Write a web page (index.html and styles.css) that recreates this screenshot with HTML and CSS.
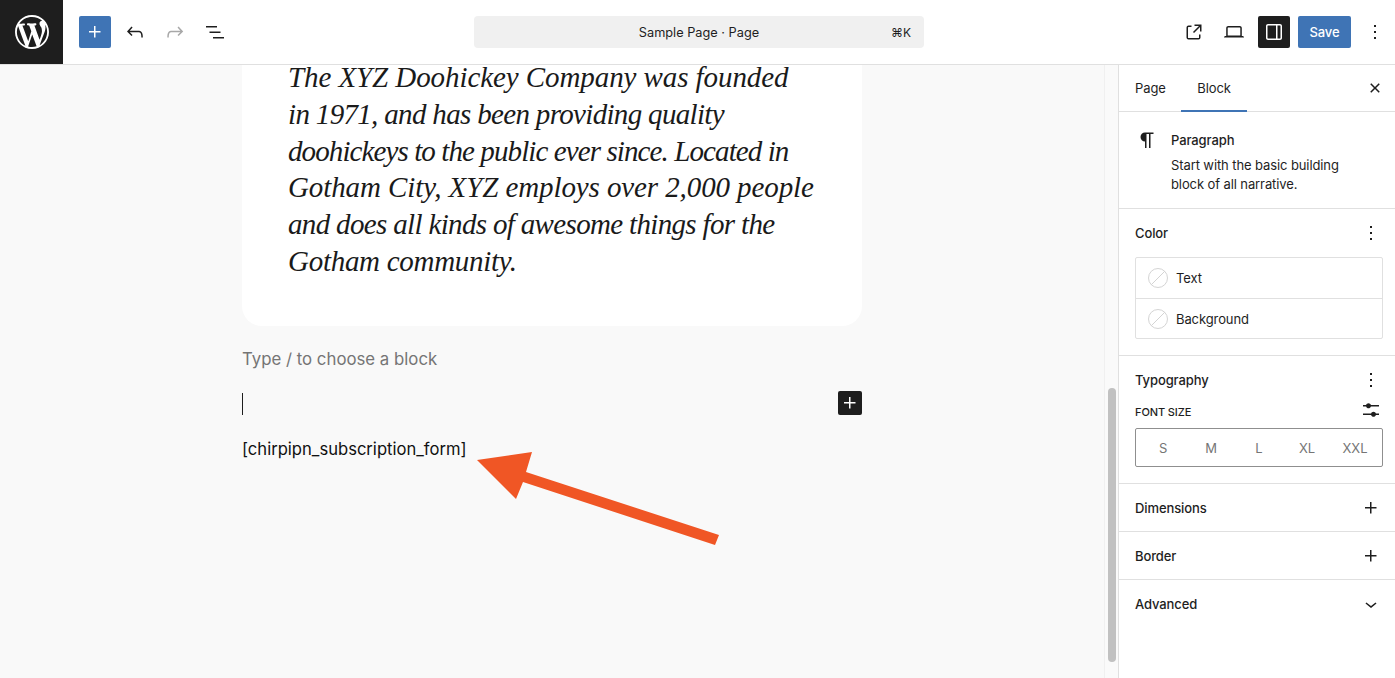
FILE: index.html
```html
<!DOCTYPE html>
<html lang="en">
<head>
<meta charset="utf-8">
<title>Sample Page</title>
<link rel="stylesheet" href="styles.css">
</head>
<body>
<header class="topbar">
  <a class="logo"><svg width="34" height="34" viewBox="0 0 20 20"><path fill="#fff" d="M20 10c0-5.51-4.49-10-10-10C4.48 0 0 4.49 0 10c0 5.52 4.48 10 10 10 5.51 0 10-4.48 10-10zM7.78 15.37L4.37 6.22c.55-.02 1.17-.08 1.17-.08.5-.06.44-1.13-.06-1.11 0 0-1.45.11-2.37.11-.18 0-.37 0-.58-.01C4.12 2.69 6.87 1.11 10 1.11c2.33 0 4.45.87 6.05 2.34-.68-.11-1.65.39-1.65 1.58 0 .74.45 1.36.9 2.1.35.61.55 1.36.55 2.46 0 1.49-1.4 5-1.4 5l-3.03-8.37c.54-.02.82-.17.82-.17.5-.05.44-1.25-.06-1.22 0 0-1.44.12-2.38.12-.87 0-2.33-.12-2.33-.12-.5-.03-.56 1.2-.06 1.22l.92.08 1.26 3.41zM17.41 10c.24-.64.74-1.87.43-4.25.7 1.29 1.05 2.71 1.05 4.25 0 3.29-1.73 6.24-4.4 7.78.97-2.59 1.94-5.2 2.92-7.78zM6.1 18.09C3.12 16.65 1.11 13.53 1.11 10c0-1.3.23-2.48.72-3.59C3.25 10.3 4.67 14.2 6.1 18.09zm4.03-6.63l2.58 6.98c-.86.29-1.76.45-2.71.45-.79 0-1.57-.11-2.29-.33.81-2.38 1.62-4.74 2.42-7.1z"/></svg></a>
  <div class="tools-left">
    <span class="btn btn-primary"><svg class="ico" viewBox="0 0 24 24"><path d="M11 12.5V17.5H12.5V12.5H17.5V11H12.5V6H11V11H6V12.5H11Z"/></svg></span>
    <span class="btn btn-gap"><svg class="ico" viewBox="0 0 24 24"><path d="M18.3 11.7c-.6-.6-1.4-.9-2.3-.9H6.7l2.9-3.3-1.1-1-4.5 5L8.5 16l1-1-2.7-2.7H16c.5 0 .9.2 1.3.5 1 1 1 3.4 1 4.5v.3h1.5v-.2c0-1.5 0-4.3-1.5-5.7z"/></svg></span>
    <span class="btn btn-gap btn-disabled"><svg class="ico" viewBox="0 0 24 24"><path d="M15.6 6.5l-1.1 1 2.9 3.3H8c-.9 0-1.7.3-2.3.9-1.4 1.5-1.4 4.2-1.4 5.6v.2h1.5v-.3c0-1.1 0-3.5 1-4.5.3-.3.7-.5 1.3-.5h9.2L14.5 15l1.1 1.1 4.6-4.6-4.6-5z"/></svg></span>
    <span class="btn btn-gap"><svg class="ico" viewBox="0 0 24 24"><path d="M3 6h11v1.5H3V6Zm3.5 5.5h11V13h-11v-1.5ZM21 17H10v1.5h11V17Z"/></svg></span>
  </div>
  <div class="command-wrap">
    <div class="command"><span class="command-title">Sample Page · Page</span><span class="command-key">⌘K</span></div>
  </div>
  <div class="tools-right">
    <span class="btn"><svg class="ico" viewBox="0 0 24 24"><path d="M19.5 4.5h-7V6h4.44l-5.97 5.97 1.06 1.06L18 7.06v4.44h1.5v-7Zm-13 1a2 2 0 0 0-2 2v10a2 2 0 0 0 2 2h10a2 2 0 0 0 2-2v-3H17v3a.5.5 0 0 1-.5.5h-10a.5.5 0 0 1-.5-.5v-10a.5.5 0 0 1 .5-.5h3V5.5h-3Z"/></svg></span>
    <span class="btn btn-gap"><svg class="ico" viewBox="0 0 24 24"><path d="M20.5 16h-.7V8c0-1.1-.9-2-2-2H6.2c-1.1 0-2 .9-2 2v8h-.7c-.8 0-1.5.7-1.5 1.5h20c0-.8-.7-1.5-1.5-1.5zM5.7 8c0-.3.2-.5.5-.5h11.6c.3 0 .5.2.5.5v7.6H5.7V8z"/></svg></span>
    <span class="btn btn-dark"><svg class="ico" viewBox="0 0 24 24"><path fill-rule="evenodd" d="M18 4H6c-1.1 0-2 .9-2 2v12c0 1.1.9 2 2 2h12c1.1 0 2-.9 2-2V6c0-1.1-.9-2-2-2zm-4 14.5H6c-.3 0-.5-.2-.5-.5V6c0-.3.2-.5.5-.5h8v13zm4.5-.5c0 .3-.2.5-.5.5h-2.5v-13H18c.3 0 .5.2.5.5v12z"/></svg></span>
    <span class="save">Save</span>
    <span class="btn btn-more"><svg class="ico" viewBox="0 0 24 24"><path d="M13 19h-2v-2h2v2zm0-6h-2v-2h2v2zm0-6h-2V5h2v2z"/></svg></span>
  </div>
</header>
<main class="workspace">
  <section class="canvas">
    <div class="canvas-inner">
      <div class="card">
        <p class="quote"><span class="line line-1">The XYZ Doohickey Company was founded</span><span class="line line-2">in 1971, and has been providing quality</span><span class="line line-3">doohickeys to the public ever since. Located in</span><span class="line line-4">Gotham City, XYZ employs over 2,000 people</span><span class="line line-5">and does all kinds of awesome things for the</span><span class="line line-6">Gotham community.</span></p>
      </div>
      <p class="placeholder">Type / to choose a block</p>
      <div class="empty-block"><span class="caret"></span><span class="inline-add"><svg width="24" height="24" viewBox="0 0 24 24"><path fill="#fff" d="M11 12.5V17.5H12.5V12.5H17.5V11H12.5V6H11V11H6V12.5H11Z"/></svg></span></div>
      <p class="shortcode">[chirpipn_subscription_form]</p>
    </div>
    <svg class="arrow" width="260" height="110" viewBox="470 445 260 110"><polygon fill="#f05625" points="477,460 532,452 526,472 719,535 715,545 523,482 516,499"/></svg>
    <div class="scroll-track"><span class="scroll-thumb"></span></div>
  </section>
  <aside class="sidebar">
    <div class="tabs">
      <span class="tab tab-page">Page</span>
      <span class="tab tab-active">Block</span>
      <span class="tab-close"><svg class="ico" viewBox="0 0 24 24"><path d="M12 13.06l3.712 3.713 1.061-1.06L13.061 12l3.712-3.712-1.06-1.06L12 10.938 8.288 7.227l-1.061 1.06L10.939 12l-3.712 3.712 1.06 1.061L12 13.061z"/></svg></span>
    </div>
    <div class="block-card">
      <svg class="block-icon" width="24" height="24" viewBox="0 0 24 24"><path d="M18.5 4.5H10C7.5 4.5 5.5 6.4 5.5 9s2 4.500 4.500 4.500V20h1.500V6h2.500v14H15.500V6h3z"/></svg>
      <div>
        <h2 class="block-name">Paragraph</h2>
        <p class="block-desc">Start with the basic building<br>block of all narrative.</p>
      </div>
    </div>
    <div class="panel">
      <div class="panel-head"><h3 class="panel-title">Color</h3><svg class="ico" viewBox="0 0 24 24"><path d="M13 19h-2v-2h2v2zm0-6h-2v-2h2v2zm0-6h-2V5h2v2z"/></svg></div>
      <div class="color-box">
        <div class="color-row"><span class="swatch"></span>Text</div>
        <div class="color-row"><span class="swatch"></span>Background</div>
      </div>
    </div>
    <div class="panel">
      <div class="panel-head"><h3 class="panel-title">Typography</h3><svg class="ico" viewBox="0 0 24 24"><path d="M13 19h-2v-2h2v2zm0-6h-2v-2h2v2zm0-6h-2V5h2v2z"/></svg></div>
      <div class="font-head"><span class="font-label">FONT SIZE</span><svg class="ico" viewBox="0 0 24 24"><path d="M14.5 13.8c-1.100 0-2.100.7-2.400 1.800H4V17h8.100c.3 1 1.300 1.800 2.400 1.800s2.100-.7 2.400-1.800H20v-1.500h-3.100c-.3-1-1.300-1.700-2.400-1.700zM11.900 7c-.3-1-1.300-1.800-2.400-1.800S7.400 6 7.100 7H4v1.500h3.100c.3 1 1.300 1.800 2.400 1.800s2.100-.7 2.400-1.800H20V7h-8.100z"/></svg></div>
      <div class="segments"><span>S</span><span>M</span><span>L</span><span>XL</span><span>XXL</span></div>
    </div>
    <div class="panel panel-closed"><h3 class="panel-title">Dimensions</h3><svg class="ico" viewBox="0 0 24 24"><path d="M11 12.5V17.5H12.5V12.5H17.5V11H12.500V6H11V11H6V12.5H11Z"/></svg></div>
    <div class="panel panel-closed"><h3 class="panel-title">Border</h3><svg class="ico" viewBox="0 0 24 24"><path d="M11 12.5V17.5H12.5V12.5H17.5V11H12.500V6H11V11H6V12.5H11Z"/></svg></div>
    <div class="panel panel-closed panel-last"><h3 class="panel-title">Advanced</h3><svg class="ico" viewBox="0 0 24 24"><path d="M17.5 11.600L12 16l-5.500-4.400.9-1.200L12 14l4.500-3.600 1 1.200z"/></svg></div>
  </aside>
</main>
</body>
</html>
```
FILE: styles.css
```css
* { box-sizing: border-box; }
html, body { margin: 0; height: 100%; }
body {
  display: flex;
  flex-direction: column;
  height: 678px;
  overflow: hidden;
  font-family: Inter, "Liberation Sans", sans-serif;
  font-size: 13px;
  letter-spacing: -0.1px;
  color: #1e1e1e;
  background: #fff;
}
h2, h3, p { margin: 0; font-weight: 400; }
.ico { width: 24px; height: 24px; fill: currentColor; display: block; flex: none; }

.topbar {
  flex: none;
  height: 65px;
  display: flex;
  align-items: center;
  border-bottom: 1px solid #e0e0e0;
}
.logo {
  width: 63px;
  height: 64px;
  background: #1e1e1e;
  display: flex;
  align-items: center;
  justify-content: center;
}
.tools-left { display: flex; align-items: center; margin-left: 16px; width: 395px; }
.btn {
  width: 32px;
  height: 32px;
  border-radius: 2px;
  display: flex;
  align-items: center;
  justify-content: center;
}
.btn-gap { margin-left: 8px; }
.btn-primary { background: #3f74b5; color: #fff; }
.btn-disabled { color: #a8a8a8; }
.btn-dark { background: #1e1e1e; color: #fff; margin-left: 8px; }
.command-wrap { width: 450px; }
.command {
  height: 32px;
  background: #f0f0f0;
  border-radius: 4px;
  display: flex;
  align-items: center;
  font-size: 12.75px;
  letter-spacing: 0;
  position: relative;
}
.command-title { flex: 1; text-align: center; }
.command-key { position: absolute; right: 13px; font-size: 12px; }
.tools-right { display: flex; align-items: center; margin-left: auto; padding-right: 4px; }
.save {
  width: 53px;
  height: 32px;
  margin-left: 8px;
  background: #3f74b5;
  color: #fff;
  border-radius: 2px;
  display: flex;
  align-items: center;
  justify-content: center;
  font-weight: 500;
}
.btn-more { margin-left: 8px; }

.workspace { flex: 1; display: flex; min-height: 0; }
.canvas {
  flex: 1;
  position: relative;
  overflow: hidden;
  background: #f9f9f9;
  display: flex;
}
.canvas-inner { margin-left: 242px; width: 620px; }
.card {
  margin-top: -6px;
  height: 267px;
  background: #fff;
  border-radius: 0 0 20px 20px;
  padding: 0 46px;
}
.quote {
  font-family: "Liberation Serif", serif;
  font-style: italic;
  font-size: 29px;
  line-height: 36.8px;
  color: #1a1a1a;
  white-space: nowrap;
}
.line { display: block; }
.line-1 { letter-spacing: -0.08px; }
.line-2 { letter-spacing: -0.67px; }
.line-3 { letter-spacing: -0.9px; }
.line-4 { letter-spacing: -0.1px; }
.line-5 { letter-spacing: -0.66px; }
.line-6 { letter-spacing: -0.28px; }
.placeholder { margin-top: 20px; font-size: 16.8px; letter-spacing: 0; line-height: 26px; color: #757575; }
.empty-block {
  margin-top: 19px;
  height: 24px;
  display: flex;
  align-items: center;
  justify-content: space-between;
}
.caret { width: 1px; height: 22px; margin-top: 2px; background: #1e1e1e; }
.inline-add { width: 24px; height: 24px; background: #1e1e1e; border-radius: 2px; display: block; }
.shortcode { margin-top: 21px; font-size: 16.6px; letter-spacing: 0; line-height: 26px; color: #111; }
.arrow { position: absolute; left: 470px; top: 380px; }
.scroll-track {
  position: absolute;
  top: 0;
  right: 0;
  bottom: 0;
  width: 14px;
  background: #fafafa;
  border-left: 1px solid #f0f0f0;
}
.scroll-thumb {
  position: absolute;
  left: 3px;
  top: 323px;
  width: 8px;
  height: 274px;
  border-radius: 4px;
  background: #c1c1c1;
}

.sidebar {
  flex: none;
  width: 277px;
  background: #fff;
  border-left: 1px solid #e0e0e0;
}
.tabs {
  height: 47px;
  display: flex;
  align-items: stretch;
  border-bottom: 1px solid #e0e0e0;
}
.tab { display: flex; align-items: center; padding: 0 16px; }
.tab-page { padding-right: 15.5px; }
.tab-active { box-shadow: inset 0 -2px 0 #3f74b5; margin-bottom: -1px; padding-bottom: 1px; }
.tab-close { margin-left: auto; padding-right: 8px; display: flex; align-items: center; }
.block-card {
  display: flex;
  gap: 12px;
  padding: 16px 16px 14px;
  height: 97px;
  border-bottom: 1px solid #e0e0e0;
}
.block-icon { flex: none; fill: #1e1e1e; width: 24px; height: 24px; }
.block-name { font-size: 13px; line-height: 24px; font-weight: 500; }
.block-desc { margin-top: 4px; line-height: 19px; }
.panel { padding: 16px 12px 16px 16px; border-bottom: 1px solid #e0e0e0; }
.panel-head { display: flex; align-items: center; justify-content: space-between; height: 16px; }
.panel-title { font-size: 13px; line-height: 16px; font-weight: 500; }
.color-box { margin-top: 16px; border: 1px solid #e0e0e0; border-radius: 2px; }
.color-row { height: 40px; display: flex; align-items: center; gap: 8px; padding-left: 12px; }
.color-row + .color-row { border-top: 1px solid #e0e0e0; }
.swatch {
  width: 20px;
  height: 20px;
  border-radius: 50%;
  border: 1px solid #d4d4d4;
  background: linear-gradient(-45deg, transparent 48%, #d4d4d4 48%, #d4d4d4 52%, transparent 52%);
}
.font-head { display: flex; align-items: center; justify-content: space-between; height: 24px; margin-top: 10px; }
.font-label { font-size: 11px; font-weight: 500; margin-top: 4px; }
.segments {
  margin-top: 6px;
  height: 39px;
  border: 1px solid #8f8f8f;
  border-radius: 2px;
  padding: 0 3px;
  display: grid;
  grid-template-columns: repeat(5, 1fr);
  align-items: center;
  text-align: center;
  color: #757575;
}
.panel-closed {
  height: 48px;
  padding: 0 12px 0 16px;
  display: flex;
  align-items: center;
  justify-content: space-between;
}
.panel-last { border-bottom: 0; }
```
